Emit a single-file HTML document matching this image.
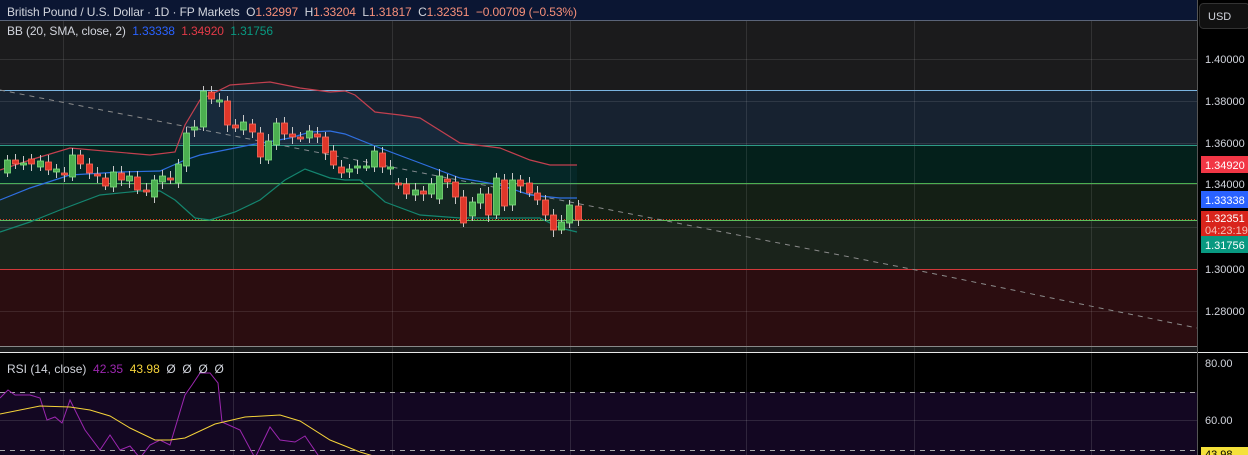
<!DOCTYPE html>
<html><head><meta charset="utf-8">
<style>
html,body{margin:0;padding:0;background:#000;width:1248px;height:455px;overflow:hidden;font-family:"Liberation Sans",sans-serif}
svg{display:block}
text{font-family:"Liberation Sans",sans-serif;white-space:pre}
</style></head><body>
<svg id="s" width="1248" height="455" xmlns="http://www.w3.org/2000/svg">
<rect x="0" y="0" width="1197" height="352" fill="#1b1b1c"/>
<rect x="0" y="0" width="1197" height="20" fill="#0b1633"/>
<rect x="0" y="90" width="1197" height="55" fill="#172230"/>
<rect x="0" y="145" width="1197" height="38" fill="#04201b"/>
<rect x="0" y="183" width="1197" height="86" fill="#141f15"/>
<rect x="0" y="220" width="1197" height="49" fill="#1a231b"/>
<rect x="0" y="269" width="1197" height="77" fill="#2b0d10"/>
<g stroke="#ffffff" stroke-opacity="0.1" stroke-width="1">
<line x1="0" y1="59.5" x2="1197" y2="59.5"/><line x1="0" y1="101.5" x2="1197" y2="101.5"/>
<line x1="0" y1="143.5" x2="1197" y2="143.5"/><line x1="0" y1="184.5" x2="1197" y2="184.5"/>
<line x1="0" y1="227.5" x2="1197" y2="227.5"/><line x1="0" y1="311.5" x2="1197" y2="311.5"/>
<line x1="63.5" y1="20" x2="63.5" y2="455"/><line x1="233.5" y1="20" x2="233.5" y2="455"/>
<line x1="392.5" y1="20" x2="392.5" y2="455"/><line x1="570.5" y1="20" x2="570.5" y2="455"/>
<line x1="746.5" y1="20" x2="746.5" y2="455"/><line x1="914.5" y1="20" x2="914.5" y2="455"/>
<line x1="1091.5" y1="20" x2="1091.5" y2="455"/>
</g>
<line x1="0" y1="20.5" x2="1197" y2="20.5" stroke="#5a6478"/>
<line x1="0" y1="90.5" x2="1197" y2="90.5" stroke="#7ab4e0"/>
<line x1="0" y1="145.5" x2="1197" y2="145.5" stroke="#2e9c86"/>
<line x1="0" y1="183.5" x2="1197" y2="183.5" stroke="#4caf50"/>
<line x1="0" y1="220.5" x2="1197" y2="220.5" stroke="#5cbf5c"/>
<line x1="0" y1="219.5" x2="1197" y2="219.5" stroke="#e0401c" stroke-dasharray="1 2"/>
<line x1="0" y1="269.5" x2="1197" y2="269.5" stroke="#d2383a"/>
<line x1="0" y1="346.5" x2="1197" y2="346.5" stroke="#888"/>
<polyline points="0,90 911,269 1197,328" fill="none" stroke="#8a8a8a" stroke-dasharray="5 5"/>
<g id="bb"></g>
<g id="c"></g>
<rect x="0" y="353" width="1197" height="102" fill="#000"/>
<rect x="0" y="392" width="1197" height="63" fill="#130722"/>
<g stroke="#ffffff" stroke-opacity="0.12"><line x1="63.5" y1="353" x2="63.5" y2="455"/><line x1="233.5" y1="353" x2="233.5" y2="455"/><line x1="392.5" y1="353" x2="392.5" y2="455"/><line x1="570.5" y1="353" x2="570.5" y2="455"/><line x1="746.5" y1="353" x2="746.5" y2="455"/><line x1="914.5" y1="353" x2="914.5" y2="455"/><line x1="1091.5" y1="353" x2="1091.5" y2="455"/><line x1="0" y1="420.5" x2="1197" y2="420.5"/></g>
<line x1="0" y1="352.5" x2="1248" y2="352.5" stroke="#e8e8e8"/>
<line x1="0" y1="392.5" x2="1197" y2="392.5" stroke="#aaa" stroke-dasharray="5 5"/>
<line x1="0" y1="450.5" x2="1197" y2="450.5" stroke="#aaa" stroke-dasharray="5 5"/>
<polyline fill="none" stroke="#9c27b0" stroke-width="1" points="0,398 8,390 15,395 30,395 40,398 47,420 55,417 62,423 70,400 85,430 100,450 110,435 120,450 130,446 140,458 150,445 160,440 170,445 185,395 192,385 200,373 210,373 218,383 222,422 240,430 255,458 270,427 280,440 295,442 305,436 320,458"/>
<polyline fill="none" stroke="#f5d33a" stroke-width="1" points="0,414 40,406 70,407 90,410 110,416 130,428 155,440 170,440 185,438 215,424 245,417 280,415 300,421 330,440 360,452 380,458"/>
<text x="7" y="373" font-size="12" fill="#d1d4dc">RSI (14, close)  <tspan fill="#9c27b0">42.35</tspan>  <tspan fill="#f5d33a">43.98</tspan>  Ø  Ø  Ø  Ø</text>
<text x="7" y="16" font-size="12" fill="#d1d4dc" textLength="570" lengthAdjust="spacing">British Pound / U.S. Dollar · 1D · FP Markets  O<tspan fill="#f7907a">1.32997</tspan>  H<tspan fill="#f7907a">1.33204</tspan>  L<tspan fill="#f7907a">1.31817</tspan>  C<tspan fill="#f7907a">1.32351</tspan>  <tspan fill="#f7907a">−0.00709 (−0.53%)</tspan></text>
<text x="7" y="35" font-size="12" fill="#d1d4dc" textLength="266" lengthAdjust="spacing">BB (20, SMA, close, 2)  <tspan fill="#2962ff">1.33338</tspan>  <tspan fill="#e23a48">1.34920</tspan>  <tspan fill="#089981">1.31756</tspan></text>
<rect x="1198" y="0" width="50" height="455" fill="#000"/>
<line x1="1197.5" y1="0" x2="1197.5" y2="455" stroke="#555"/>
<line x1="1198" y1="352.5" x2="1248" y2="352.5" stroke="#e8e8e8"/>
<rect x="1199.5" y="3.5" width="50" height="25" rx="4" fill="#111" stroke="#333"/>
<g font-size="11" fill="#d1d4dc">
<text x="1208" y="20">USD</text>
<text x="1205" y="63">1.40000</text><text x="1205" y="105">1.38000</text><text x="1205" y="147">1.36000</text>
<text x="1205" y="188">1.34000</text><text x="1205" y="273">1.30000</text><text x="1205" y="315">1.28000</text>
<text x="1205" y="367">80.00</text><text x="1205" y="424">60.00</text>
</g>
<rect x="1201" y="156" width="47" height="17" fill="#f23645"/>
<rect x="1201" y="191" width="47" height="17" fill="#2962ff"/>
<rect x="1201" y="211" width="47" height="25" fill="#d9251c"/>
<rect x="1201" y="236" width="47" height="17" fill="#089981"/>
<rect x="1201" y="447" width="47" height="10" fill="#f5e13a"/>
<g font-size="11" fill="#fff">
<text x="1205" y="169">1.34920</text><text x="1205" y="204">1.33338</text>
<text x="1205" y="222">1.32351</text><text x="1205" y="234" fill="#f5c0b8">04:23:19</text>
<text x="1205" y="249">1.31756</text>
<text x="1205" y="458" fill="#000">43.98</text>
</g>
</svg>
<script>
var ns="http://www.w3.org/2000/svg";
function pl(g,pts,col,fill){var p=document.createElementNS(ns,fill?"polygon":"polyline");p.setAttribute("points",pts.map(function(a){return a.join(",")}).join(" "));if(fill){p.setAttribute("fill",col);}else{p.setAttribute("fill","none");p.setAttribute("stroke",col);p.setAttribute("stroke-width","1.2");}g.appendChild(p);}
var up=[[0,170],[30,160],[70,148],[150,155],[175,152],[185,125],[200,100],[230,85],[270,82],[300,88],[330,92],[345,91],[355,95],[375,112],[400,115],[420,118],[460,143],[500,148],[530,160],[550,165],[577,165]];
var mid=[[0,200],[30,188],[70,175],[120,172],[160,171],[185,160],[200,155],[250,145],[290,138],[310,132],[330,131],[345,134],[380,148],[420,163],[460,178],[500,185],[530,195],[560,198],[577,198]];
var lo=[[0,232],[30,222],[60,210],[100,195],[140,191],[160,191],[175,200],[195,218],[210,220],[235,212],[260,200],[285,180],[305,169],[330,178],[345,180],[360,180],[385,202],[420,215],[460,218],[510,218],[540,218],[560,228],[577,232]];
var bb=document.getElementById("bb");
pl(bb,up.concat(lo.slice().reverse()),"rgba(33,150,243,0.06)",true);
pl(bb,up,"#c2404f");pl(bb,mid,"#2f6fe0");pl(bb,lo,"#14856f");
var d=[[160,173,1],[160,164,0],[163,164,1],[159,164,0],[161,167,1],[162,170,0],[169,172,1],[173,175,0],[155,177,1],[155,164,0],[164,173,0],[174,176,0],[178,186,0],[172,187,1],[173,180,0],[176,181,1],[177,190,0],[190,191,0],[180,197,1],[176,182,1],[178,180,0],[164,183,1],[133,166,1],[127,130,1],[91,127,1],[92,99,0],[100,101,1],[101,125,0],[125,128,0],[122,130,1],[124,132,0],[133,157,0],[141,160,1],[123,145,1],[123,134,0],[134,137,0],[137,138,0],[131,138,1],[134,137,0],[137,153,0],[151,165,0],[167,173,0],[169,172,1],[166,167,1],[166,167,1],[151,167,1],[153,167,0],[167,168,1],[183,185,0],[184,194,0],[190,195,1],[191,194,0],[184,194,1],[176,199,1],[179,182,0],[182,197,0],[197,223,0],[202,216,1],[194,203,1],[194,215,0],[178,215,1],[180,206,0],[180,205,1],[180,186,0],[183,193,0],[193,200,0],[200,215,0],[215,230,0],[222,230,1],[205,223,1],[206,220,0]];
var c=document.getElementById("c");
d.forEach(function(k,i){var x=Math.round(7+i*8.15);var col=k[2]?"#4caf50":"#e0372a";var br=k[2]?"#7ee07e":"#ff6a5a";
var w=document.createElementNS(ns,"line");w.setAttribute("x1",x+0.5);w.setAttribute("x2",x+0.5);w.setAttribute("y1",k[0]-5-(i%3));w.setAttribute("y2",k[1]+4+(i%4));w.setAttribute("stroke","#c8c8c8");c.appendChild(w);
var r=document.createElementNS(ns,"rect");r.setAttribute("x",x-2.5);r.setAttribute("y",k[0]);r.setAttribute("width",6);r.setAttribute("height",Math.max(2,k[1]-k[0]));r.setAttribute("fill",col);r.setAttribute("stroke",br);r.setAttribute("stroke-width","0.8");c.appendChild(r);});
</script>
</body></html>
